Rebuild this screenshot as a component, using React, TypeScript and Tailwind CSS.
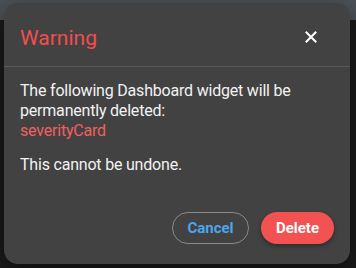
export default function App() {
  return (
    <div className="relative w-[356px] h-[268px] bg-[#1b1b1b] overflow-hidden font-['Roboto',sans-serif]">
      <div className="absolute inset-x-0 top-0 h-[20px] bg-[#4c5257]" />
      <div className="absolute left-[4px] top-[3px] w-[346px] h-[261px] rounded-[14px] bg-[#424242] shadow-[0_8px_24px_rgba(0,0,0,0.5)] flex flex-col">
        <div className="h-[64px] flex items-center justify-between pl-[16px] pr-[31px] border-b border-[#595959]">
          <h2 className="text-[21px] leading-[32px] text-[#f44d4d] pt-[6px]">Warning</h2>
          <button className="w-[16px] h-[16px] flex items-center justify-center pt-[4px]">
            <svg width="12" height="12" viewBox="0 0 12 12" fill="none">
              <path d="M1.5 1.5 L10.5 10.5 M10.5 1.5 L1.5 10.5" stroke="#ffffff" strokeWidth="2" strokeLinecap="square" />
            </svg>
          </button>
        </div>
        <div className="px-[16px] pt-[14px] text-[16px] leading-[20px] tracking-[-0.2px] text-[#f2f2f2]">
          <p>The following Dashboard widget will be permanently deleted:</p>
          <p className="text-[#f26060]">severityCard</p>
          <p className="mt-[14px]">This cannot be undone.</p>
        </div>
        <div className="mt-auto flex justify-end gap-[12px] pr-[16px] pb-[20px]">
          <button className="w-[77px] h-[32px] rounded-full border border-[#8a8a8a] text-[#4ca6ec] text-[15px] font-bold">
            Cancel
          </button>
          <button className="w-[73px] h-[32px] rounded-full bg-[#f25252] text-white text-[15px] font-bold shadow-[0_2px_4px_rgba(0,0,0,0.35)]">
            Delete
          </button>
        </div>
      </div>
    </div>
  )
}
